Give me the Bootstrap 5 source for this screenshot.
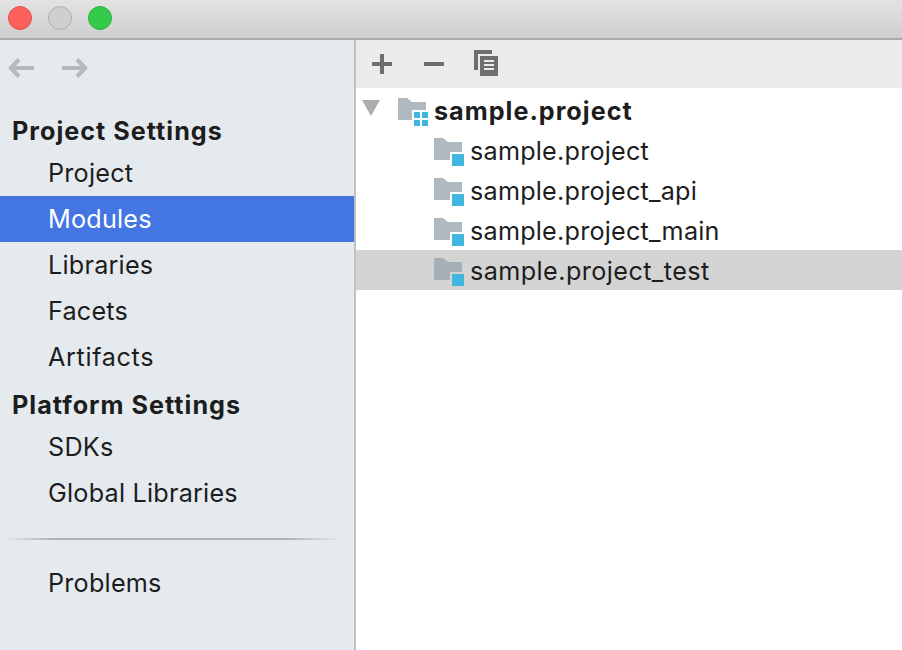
<!DOCTYPE html>
<html lang="en">
<head>
<meta charset="utf-8">
<meta name="viewport" content="width=device-width, initial-scale=1">
<title>Project Structure</title>
<link rel="stylesheet" href="https://cdn.jsdelivr.net/npm/bootstrap@5.3.0/dist/css/bootstrap.min.css">
<style>
  body { font-family: Inter, "Liberation Sans", sans-serif; font-size: 25.2px; line-height: 40px; color: #1d1d1d; letter-spacing: .22px; }
  svg { display: block; flex: none; }
  .titlebar { height: 40px; padding: 0 8px 2px; gap: 16px; background: linear-gradient(#e3e3e3, #cecece); border-bottom: 2px solid #a9a9a9; }
  .light { width: 24px; height: 24px; border: 1px solid; }
  .light-close { background: #fe605c; border-color: #e2504b; }
  .light-min { background: #cfcfcf; border-color: #adadad; }
  .light-zoom { background: #34cb4b; border-color: #2bb33c; }
  .sidebar { width: 356px; background: #e5eaee; border-right: 2px solid #c0c0c0; }
  .history { height: 72px; padding: 18px 8px 0; gap: 26px; }
  .side-title { height: 38px; line-height: 38px; padding-left: 12px; font-weight: 700; letter-spacing: 1px; }
  .side-title-next { height: 44px; line-height: 50px; }
  .side-nav .nav-link { height: 46px; line-height: 46px; padding: 0 0 0 48px; color: #1d1d1d; border-radius: 0; }
  .side-nav .nav-link.active { background: #4376e2; color: #fff; }
  .side-nav .wide { letter-spacing: .65px; }
  .rule { height: 2px; margin: 22px 12px 20px 3px; background: linear-gradient(90deg, transparent, #b3b2b2 15%, #b3b2b2 84%, transparent); }
  .tools { height: 48px; background: #ebebeb; padding: 0 16px; gap: 32px; }
  .copy-icon { margin: 0 0 2px -2px; }
  .tree { padding-top: 2px; }
  .tree-row { height: 40px; line-height: 42px; padding-left: 78px; gap: 6px; }
  .tree-root { padding-left: 6px; font-weight: 700; letter-spacing: 1px; }
  .tree-row.selected { background: #d4d4d4; letter-spacing: .42px; }
  .tree-row.selected .folder-tint { fill: #a5b0b7; }
  .folder-tint { fill: #aeb9c0; }
  .module { fill: #40b6e0; }
</style>
</head>
<body class="vh-100 overflow-hidden bg-white d-flex flex-column text-nowrap">
<svg width="0" height="0" class="position-absolute" aria-hidden="true">
  <defs>
    <g id="module-icon">
      <path d="M0 0H9L14 4H28V14H16V22H0Z"/>
      <path class="module" d="M18 16H30V28H18Z"/>
    </g>
  </defs>
</svg>
<header class="titlebar d-flex align-items-center flex-shrink-0">
  <span class="light light-close rounded-circle"></span>
  <span class="light light-min rounded-circle"></span>
  <span class="light light-zoom rounded-circle"></span>
</header>
<div class="d-flex flex-grow-1">
  <aside class="sidebar flex-shrink-0">
    <div class="history d-flex">
      <svg width="27" height="20" fill="none" stroke="#b8b8b8" stroke-width="4"><path d="M26 10H3M11 1.500L2.800 10L11 18.500"/></svg>
      <svg width="27" height="20" fill="none" stroke="#b8b8b8" stroke-width="4"><path d="M1 10H24M16 1.500L24.200 10L16 18.500"/></svg>
    </div>
    <div class="side-title">Project Settings</div>
    <nav class="side-nav nav nav-pills flex-column flex-nowrap">
      <a class="nav-link" href="#">Project</a>
      <a class="nav-link active" href="#">Modules</a>
      <a class="nav-link" href="#">Libraries</a>
      <a class="nav-link" href="#">Facets</a>
      <a class="nav-link wide" href="#">Artifacts</a>
    </nav>
    <div class="side-title side-title-next">Platform Settings</div>
    <nav class="side-nav nav nav-pills flex-column flex-nowrap">
      <a class="nav-link" href="#">SDKs</a>
      <a class="nav-link" href="#">Global Libraries</a>
    </nav>
    <div class="rule"></div>
    <nav class="side-nav nav nav-pills flex-column flex-nowrap">
      <a class="nav-link" href="#">Problems</a>
    </nav>
  </aside>
  <main class="flex-grow-1">
    <div class="tools d-flex align-items-center">
      <svg width="20" height="20" fill="#6e6e6e"><path d="M8 0H12V8H20V12H12V20H8V12H0V8H8Z"/></svg>
      <svg width="20" height="20" fill="#6e6e6e"><path d="M0 8H20V12H0Z"/></svg>
      <svg class="copy-icon" width="24" height="26" fill="#6e6e6e"><path d="M0 0H18V4H4V20H0Z"/><path fill-rule="evenodd" d="M6 6H24V26H6ZM10 10V12H20V10ZM10 14V16H20V14ZM10 18V20H20V18Z"/></svg>
    </div>
    <div class="tree">
      <div class="tree-row tree-root d-flex">
        <svg width="30" height="30"><path fill="#adadad" d="M0 10H18L9 26Z"/></svg>
        <svg width="30" height="38"><path class="folder-tint" d="M0 8H9L14 12H28V20H14V30H0Z"/><path class="module" d="M16 22H22V28H16ZM24 22H30V28H24ZM16 30H22V36H16ZM24 30H30V36H24Z"/></svg>
        <span>sample.project</span>
      </div>
      <div class="tree-row d-flex"><svg class="folder-tint" width="30" height="36"><use href="#module-icon" y="8"/></svg><span>sample.project</span></div>
      <div class="tree-row d-flex"><svg class="folder-tint" width="30" height="36"><use href="#module-icon" y="8"/></svg><span>sample.project_api</span></div>
      <div class="tree-row d-flex"><svg class="folder-tint" width="30" height="36"><use href="#module-icon" y="8"/></svg><span>sample.project_main</span></div>
      <div class="tree-row selected d-flex"><svg class="folder-tint" width="30" height="36"><use href="#module-icon" y="8"/></svg><span>sample.project_test</span></div>
    </div>
  </main>
</div>
<script src="https://cdn.jsdelivr.net/npm/bootstrap@5.3.0/dist/js/bootstrap.bundle.min.js"></script>
</body>
</html>
